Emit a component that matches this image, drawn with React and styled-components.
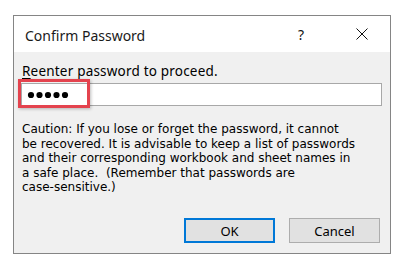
import React from 'react';
import styled, { createGlobalStyle } from 'styled-components';

const GlobalStyle = createGlobalStyle`
  html, body {
    margin: 0;
    padding: 0;
    background: #ffffff;
  }
  * {
    box-sizing: border-box;
  }
`;

const Page = styled.div`
  padding: 15px 0 0 13px;
  font-family: "Noto Sans", "Open Sans", sans-serif;
  color: #000000;
`;

const Dialog = styled.div`
  width: 378px;
  height: 239px;
  border: 1px solid #858585;
  display: flex;
  flex-direction: column;
  background: #f0f0f0;
`;

const TitleBar = styled.div`
  height: 36px;
  flex-shrink: 0;
  background: #ffffff;
  display: flex;
  align-items: center;
  padding-left: 11px;
`;

const Title = styled.div`
  flex: 1;
  font-size: 14px;
  padding-top: 2px;
  color: #1a1a1a;
`;

const TitleButton = styled.div`
  width: ${(p) => p.$w}px;
  margin-left: ${(p) => p.$ml || 0}px;
  margin-right: ${(p) => p.$mr || 0}px;
  display: flex;
  justify-content: center;
  align-items: center;
  font-size: 14px;
  color: #111;
`;

const Body = styled.div`
  flex: 1;
  padding: 11px 8px 0 7px;
  display: flex;
  flex-direction: column;
`;

const Label = styled.label`
  font-size: 13.5px;
  letter-spacing: 0.2px;
  line-height: 17px;
  padding-left: 1px;

  u {
    text-decoration: underline;
    text-underline-offset: 2px;
  }
`;

const InputWrap = styled.div`
  position: relative;
  margin-top: 3px;
  height: 23px;
`;

const PasswordInput = styled.div`
  height: 23px;
  border: 1px solid #a8a8a8;
  background: #ffffff;
  display: flex;
  align-items: center;
  padding-left: 5px;
`;

const Highlight = styled.div`
  position: absolute;
  left: -3px;
  top: -4px;
  width: 72px;
  height: 29px;
  border: 3px solid #e4434e;
  box-shadow: 1px 1px 3px rgba(0, 0, 0, 0.25);
  pointer-events: none;
`;

const Caution = styled.p`
  margin: 16px 0 0 1px;
  font-family: "DejaVu Sans", "Noto Sans", sans-serif;
  font-size: 12px;
  line-height: 14.5px;
  white-space: nowrap;
`;

const ButtonRow = styled.div`
  margin-top: auto;
  margin-bottom: 10px;
  display: flex;
  justify-content: flex-end;
  gap: 14px;
  padding-right: 2px;
`;

const Button = styled.button`
  width: 91px;
  height: 25px;
  font-family: inherit;
  font-size: 13px;
  color: #000;
  background: #e1e1e1;
  border: ${(p) => (p.$default ? '2px solid #0078d7' : '1px solid #adadad')};
  padding: 0;
`;

const Dots = () => (
  <svg width="42" height="8" viewBox="0 0 42 8">
    {[0, 1, 2, 3, 4].map((i) => (
      <circle key={i} cx={4 + i * 8.5} cy="4" r="3.1" fill="#000" />
    ))}
  </svg>
);

const CloseIcon = () => (
  <svg width="12" height="12" viewBox="0 0 12 12">
    <path d="M0.5 0.5 L11.5 11.5 M11.5 0.5 L0.5 11.5" stroke="#111" strokeWidth="1" />
  </svg>
);

export default function App() {
  return (
    <>
      <GlobalStyle />
      <Page>
        <Dialog>
          <TitleBar>
            <Title>Confirm Password</Title>
            <TitleButton $w={22}>?</TitleButton>
            <TitleButton $w={30} $ml={35} $mr={13}>
              <CloseIcon />
            </TitleButton>
          </TitleBar>
          <Body>
            <Label>
              <u>R</u>eenter password to proceed.
            </Label>
            <InputWrap>
              <PasswordInput>
                <Dots />
              </PasswordInput>
              <Highlight />
            </InputWrap>
            <Caution>
              Caution: If you lose or forget the password, it cannot
              <br />
              be recovered. It is advisable to keep a list of passwords
              <br />
              and their corresponding workbook and sheet names in
              <br />
              a safe place.&nbsp; (Remember that passwords are
              <br />
              case-sensitive.)
            </Caution>
            <ButtonRow>
              <Button $default>OK</Button>
              <Button>Cancel</Button>
            </ButtonRow>
          </Body>
        </Dialog>
      </Page>
    </>
  );
}
